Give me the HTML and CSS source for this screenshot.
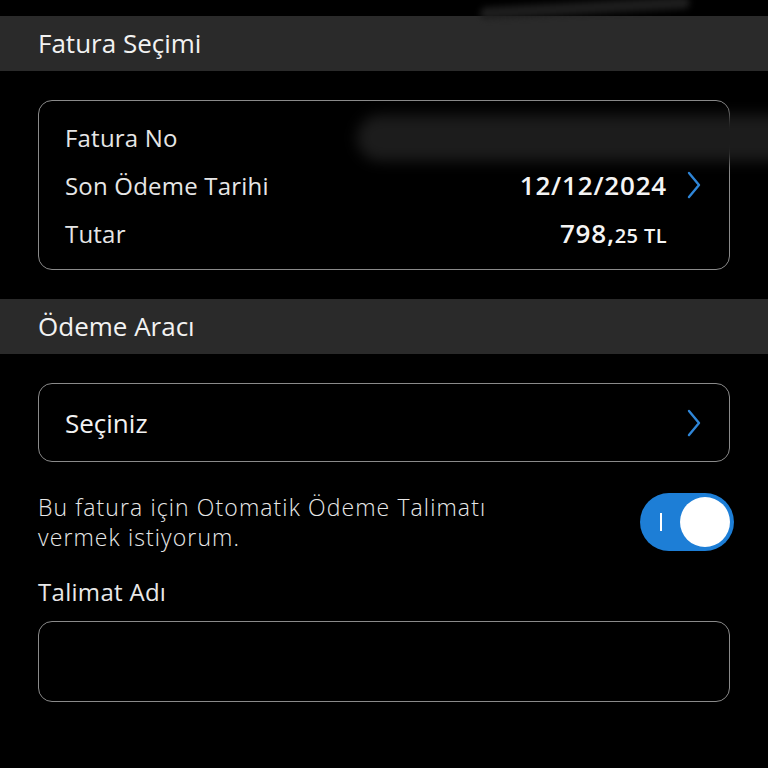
FILE: index.html
```html
<!DOCTYPE html>
<html lang="tr">

<head>
  <meta charset="utf-8">
  <meta name="viewport" content="width=device-width, initial-scale=1.0">
  <title>Fatura Ödeme</title>
  <link rel="stylesheet" href="styles.css">
</head>

<body>
  <div class="top-gap"><div class="streak"></div></div>

  <div class="section-title">Fatura Seçimi</div>

  <div class="card">
    <div class="row">
      <span class="label">Fatura No</span>
    </div>
    <div class="row">
      <span class="label">Son Ödeme Tarihi</span>
      <span class="value">12/12/2024</span>
      <svg class="chevron" viewBox="0 0 16 28"><path d="M3 2 L13 14 L3 26" /></svg>
    </div>
    <div class="row">
      <span class="label">Tutar</span>
      <span class="value">798,<small>25 TL</small></span>
      <span class="chevron-space"></span>
    </div>
    <div class="masked"></div>
  </div>

  <div class="section-title">Ödeme Aracı</div>

  <div class="select-box">
    <span class="select-text">Seçiniz</span>
    <svg class="chevron" viewBox="0 0 16 28"><path d="M3 2 L13 14 L3 26" /></svg>
  </div>

  <div class="option">
    <p>Bu fatura için Otomatik Ödeme Talimatı<br>vermek istiyorum.</p>
    <div class="switch on">
      <span class="switch-mark"></span>
      <span class="switch-knob"></span>
    </div>
  </div>

  <div class="field-label">Talimat Adı</div>
  <div class="input-box"></div>
</body>

</html>
```

FILE: styles.css
```css
body,
html {
  margin: 0;
  padding: 0;
  height: 100%;
  background: #000;
  color: #ececec;
  font-family: "Open Sans", "Noto Sans", sans-serif;
  overflow: hidden;
}

.top-gap {
  position: relative;
  height: 16px;
}

/* smear left on the status area */
.streak {
  position: absolute;
  top: 2px;
  left: 480px;
  width: 210px;
  height: 12px;
  background: #1e1e1e;
  border-radius: 8px;
  transform: rotate(-3deg);
  filter: blur(3px);
}

.section-title {
  background-color: #2a2a2a;
  height: 55px;
  line-height: 55px;
  padding-left: 38px;
  font-size: 26px;
  color: #f2f2f2;
}

.card {
  position: relative;
  margin: 29px 38px 29px 38px;
  border: 1.5px solid #8a8a8a;
  border-radius: 14px;
  padding: 12px 27px 12px 26px;
}

.row {
  display: flex;
  align-items: center;
  height: 48px;
}

.label {
  flex: 1;
  font-size: 24px;
  letter-spacing: 0.2px;
  color: #e6e6e6;
}

.value {
  font-size: 26px;
  font-weight: 600;
  letter-spacing: 0.8px;
  color: #f4f4f4;
}

.value small {
  font-size: 20px;
  font-weight: 600;
  letter-spacing: 0.4px;
}

.chevron {
  width: 16px;
  height: 28px;
  margin-left: 19px;
  fill: none;
  stroke: #2f86d8;
  stroke-width: 2.4;
  stroke-linecap: round;
  stroke-linejoin: round;
}

.chevron-space {
  width: 16px;
  margin-left: 19px;
}

/* smudged-out invoice number */
.masked {
  position: absolute;
  top: 14px;
  left: 318px;
  width: 440px;
  height: 46px;
  background: #1c1c1c;
  border-radius: 24px;
  filter: blur(7px);
}

.select-box {
  display: flex;
  align-items: center;
  margin: 29px 38px 0 38px;
  height: 77px;
  border: 1.5px solid #8a8a8a;
  border-radius: 14px;
  padding: 0 27px 0 26px;
}

.select-text {
  flex: 1;
  font-size: 26px;
  font-weight: 500;
  color: #f2f2f2;
}

.option {
  display: flex;
  align-items: center;
  justify-content: space-between;
  margin: 30px 34px 0 38px;
}

.option p {
  margin: 0;
  font-size: 23px;
  font-weight: 300;
  line-height: 30px;
  letter-spacing: 1.1px;
  color: #e8e8e8;
}

.switch {
  position: relative;
  width: 94px;
  height: 58px;
  border-radius: 29px;
  background: #1d7ed6;
}

.switch-mark {
  position: absolute;
  left: 20px;
  top: 20px;
  width: 2px;
  height: 18px;
  background: #fff;
}

.switch-knob {
  position: absolute;
  right: 4px;
  top: 4px;
  width: 50px;
  height: 50px;
  border-radius: 50%;
  background: #fff;
}

.field-label {
  margin: 23px 38px 0 38px;
  font-size: 24px;
  letter-spacing: 0.3px;
  color: #e8e8e8;
}

.input-box {
  margin: 13px 38px 0 38px;
  height: 79px;
  border: 1.5px solid #8a8a8a;
  border-radius: 14px;
}
```
